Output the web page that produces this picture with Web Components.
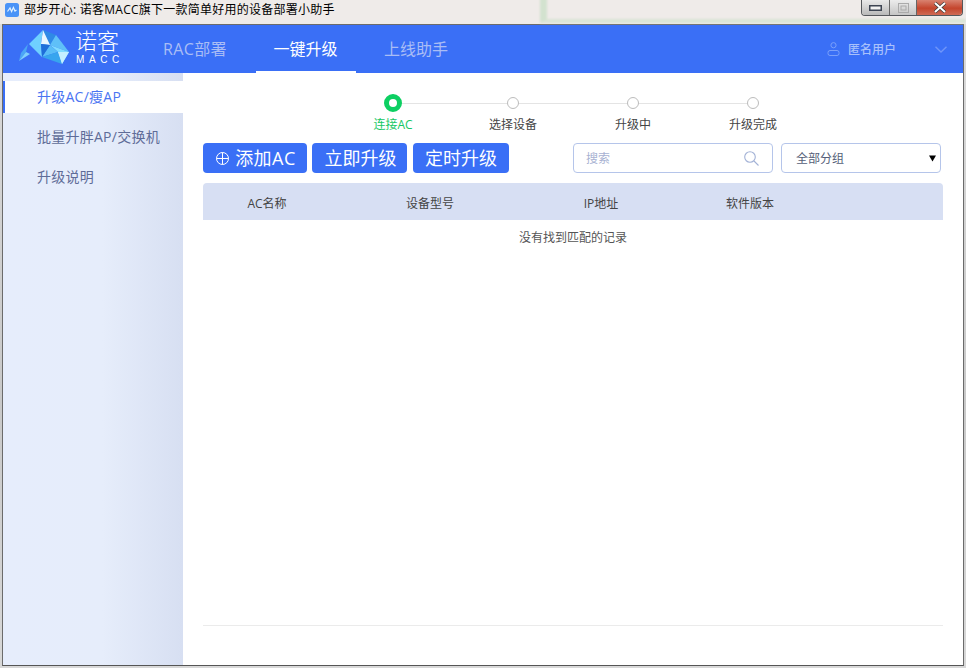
<!DOCTYPE html>
<html lang="zh">
<head>
<meta charset="utf-8">
<title>诺客MACC</title>
<style>
  html, body { margin: 0; padding: 0; height: 100%; }
  body { font-family: "Open Sans", "Noto Sans CJK SC", sans-serif; overflow: hidden; }
</style>
</head>
<body>
<app-window>
  <title-bar slot="title">部步开心: 诺客MACC旗下一款简单好用的设备部署小助手</title-bar>
  <app-header slot="header">
    <nav-tab style="letter-spacing:.4px">RAC部署</nav-tab>
    <nav-tab active>一键升级</nav-tab>
    <nav-tab>上线助手</nav-tab>
  </app-header>
  <side-nav slot="side">
    <nav-item active>升级AC/瘦AP</nav-item>
    <nav-item>批量升胖AP/交换机</nav-item>
    <nav-item>升级说明</nav-item>
  </side-nav>
  <step-bar>
    <step-item active>连接AC</step-item>
    <step-item>选择设备</step-item>
    <step-item>升级中</step-item>
    <step-item last>升级完成</step-item>
  </step-bar>
  <tool-bar>
    <tool-button plus style="width:104px;padding-left:2px;letter-spacing:.5px">添加AC</tool-button>
    <tool-button style="width:95px;margin-left:5px;padding-left:2px">立即升级</tool-button>
    <tool-button style="width:96px;margin-left:6px">定时升级</tool-button>
    <search-box slot="right">搜索</search-box>
    <group-select slot="right">全部分组</group-select>
  </tool-bar>
  <data-table></data-table>
  <page-foot></page-foot>
</app-window>

<script>
class AppWindow extends HTMLElement {
  constructor() {
    super();
    this.attachShadow({mode: 'open'}).innerHTML = `
      <style>
        :host { display: flex; flex-direction: column; box-sizing: border-box; width: 966px; height: 668px;
          background: linear-gradient(#dcdcdc, #c9c9c9 60%, #d8d8d8); font-size: 12px; }
        .frame { flex: 1; min-height: 0; margin: 0 2px 2px; display: flex; flex-direction: column;
          border: 1px solid #6b6b6b; border-bottom-color: #555; background: #fff; }
        .body { flex: 1; min-height: 0; display: flex; }
        main { flex: 1; min-width: 0; display: flex; flex-direction: column; padding: 21px 20px 39px; }
      </style>
      <slot name="title"></slot>
      <div class="frame">
        <slot name="header"></slot>
        <div class="body">
          <slot name="side"></slot>
          <main><slot></slot></main>
        </div>
      </div>`;
  }
}

class TitleBar extends HTMLElement {
  constructor() {
    super();
    this.attachShadow({mode: 'open'}).innerHTML = `
      <style>
        :host { display: flex; align-items: center; position: relative; height: 24px; padding-left: 5px;
          background: #efebe9; color: #000; font-size: 12px; letter-spacing: .25px; box-sizing: border-box; }
        .icon { width: 14px; height: 14px; margin: -4px 5px 0 0; flex: none; }
        .text { margin-top: -6px; position: relative; }
        /* window behind this one, showing through the glass */
        .behind { position: absolute; left: 540px; top: -6px; right: 0; bottom: 1px;
          border-left: 7px solid #d3e2cf; border-bottom: 4px solid #d9e4d5; filter: blur(1px); }
        .caption { position: absolute; right: 3px; top: 0; display: flex; height: 15px; width: 100px;
          border: 1px solid #55585c; border-top: 0; border-radius: 0 0 4px 4px; overflow: hidden; }
        .caption div { display: flex; align-items: center; justify-content: center; }
        .min { width: 27px; background: linear-gradient(#e9e9e9, #b9b9b9); border-right: 1px solid #666; }
        .max { width: 26px; background: linear-gradient(#ececec, #c5c5c5); border-right: 1px solid #666; }
        .close { flex: 1; background: linear-gradient(#d98270, #c4452d 55%, #cf6a55); }
      </style>
      <div class="behind"></div>
      <svg class="icon" viewBox="0 0 14 14">
        <rect width="14" height="14" rx="2.5" fill="#4a93f7"/>
        <path d="M2.5 8.5 L5 5 L6.6 8.5 L8.4 4.5 L10 8 L11.5 7" fill="none" stroke="#dff0ff" stroke-width="1.2"/>
      </svg>
      <span class="text"><slot></slot></span>
      <div class="caption">
        <div class="min"><svg width="13" height="6"><rect x=".75" y=".75" width="11.5" height="4.5" fill="#f2f2f2" stroke="#3d4452" stroke-width="1.5"/></svg></div>
        <div class="max"><svg width="11" height="10"><rect x=".5" y=".5" width="10" height="9" fill="none" stroke="#aaa"/><rect x="3" y="3" width="5" height="4" fill="none" stroke="#aaa"/></svg></div>
        <div class="close"><svg width="14" height="11" viewBox="0 0 14 11"><path d="M2 1 L12 10 M12 1 L2 10" stroke="#3b3b3b" stroke-width="3.4"/><path d="M2 1 L12 10 M12 1 L2 10" stroke="#fff" stroke-width="2"/></svg></div>
      </div>`;
  }
}

class AppHeader extends HTMLElement {
  constructor() {
    super();
    this.attachShadow({mode: 'open'}).innerHTML = `
      <style>
        :host { display: flex; height: 48px; background: #3a6ff6; flex: none; }
        .logo { width: 142px; display: flex; flex: none; }
        .logo svg { margin: 3px 0 0 15px; width: 54px; height: 38px; flex: none; }
        .brand { display: flex; flex-direction: column; margin-left: 3px; color: #fff; }
        .name { font-size: 22px; line-height: 22px; margin-top: 4px; white-space: nowrap; font-weight: 300; }
        .macc { font-size: 10px; line-height: 11px; letter-spacing: 4.6px; margin: 3px 0 0 1px; font-family: "Liberation Sans", sans-serif; }
        .tabs { display: flex; gap: 10.5px; }
        .user { margin-left: auto; display: flex; align-items: center; color: #a9c1fb; font-size: 12px; font-weight: 500; padding-right: 16px; }
        .user svg.p { margin-right: 8px; }
        .user svg.c { margin-left: 39px; }
      </style>
      <div class="logo">
        <svg viewBox="18 26 54 38">
          <path d="M19 59 L21 51 L28 42 L26 50 Z" fill="#4aa6f5"/>
          <path d="M19 59 L26 50 L30 52 Z" fill="#7fd0fb"/>
          <path d="M29 42 L43 28 L41 42 L42 55 Z" fill="#6fd0ff"/>
          <path d="M43 28 L56 33 L50 43 L41 42 Z" fill="#2f8ae6"/>
          <path d="M43 28 L50 43 L41 42 Z" fill="#e8f6ff"/>
          <path d="M56 33 L69 50 L50 43 Z" fill="#5fc0f8"/>
          <path d="M50 43 L69 50 L62 62 L58 50 Z" fill="#7fdcff"/>
          <path d="M50 43 L58 50 L42 55 Z" fill="#59bdf7"/>
          <path d="M42 55 L58 50 L62 62 Z" fill="#37a5ee"/>
          <path d="M58 50 L69 50 L62 62 Z" fill="#c4efff"/>
          <path d="M41 42 L50 43 L42 55 Z" fill="#1e6fd8"/>
        </svg>
        <div class="brand">
          <span class="name">诺客</span>
          <span class="macc">MACC</span>
        </div>
      </div>
      <div class="tabs"><slot></slot></div>
      <div class="user">
        <svg class="p" width="13" height="14" viewBox="0 0 13 14" fill="none" stroke="#7ba0fa">
          <circle cx="6.5" cy="3.2" r="2.6"/>
          <rect x="1" y="8.5" width="11" height="5" rx="2"/>
        </svg>
        匿名用户
        <svg class="c" width="12" height="7" viewBox="0 0 12 7" fill="none" stroke="#6f95f9" stroke-width="1.4"><path d="M.5 .8 L6 6 L11.5 .8"/></svg>
      </div>`;
  }
}

class NavTab extends HTMLElement {
  constructor() {
    super();
    this.attachShadow({mode: 'open'}).innerHTML = `
      <style>
        :host { display: flex; align-items: center; justify-content: center; box-sizing: border-box; width: 100px;
          height: 48px; font-size: 16px; color: #a9bdf5; border-bottom: 2px solid transparent; white-space: nowrap; }
        :host([active]) { color: #fff; border-bottom-color: #fff; }
      </style>
      <slot></slot>`;
  }
}

class SideNav extends HTMLElement {
  constructor() {
    super();
    this.attachShadow({mode: 'open'}).innerHTML = `
      <style>
        :host { display: flex; flex-direction: column; gap: 8px; flex: none; box-sizing: border-box; width: 180px; padding-top: 8px;
          background: linear-gradient(90deg, #e6edfc, #e6edfb 55%, #d7dff2); }
      </style>
      <slot></slot>`;
  }
}

class NavItem extends HTMLElement {
  constructor() {
    super();
    this.attachShadow({mode: 'open'}).innerHTML = `
      <style>
        :host { display: flex; align-items: center; box-sizing: border-box; height: 32px; padding: 0 0 2px 34px;
          font-size: 14px; letter-spacing: .25px; color: #5f6c98; white-space: nowrap; }
        :host([active]) { background: #fff; color: #4a74f2; border-left: 2px solid #3a6ff6; padding-left: 32px; }
      </style>
      <slot></slot>`;
  }
}

class StepBar extends HTMLElement {
  constructor() {
    super();
    this.attachShadow({mode: 'open'}).innerHTML = `
      <style>
        :host { display: flex; justify-content: center; flex: none; }
      </style>
      <slot></slot>`;
  }
}

class StepItem extends HTMLElement {
  constructor() {
    super();
    this.attachShadow({mode: 'open'}).innerHTML = `
      <style>
        :host { display: flex; flex-direction: column; align-items: center; position: relative; width: 120px;
          font-size: 12px; line-height: 16px; color: #444; }
        :host([active]) { color: #17c765; }
        .dot { height: 18px; display: flex; align-items: center; justify-content: center; margin-bottom: 5px; }
        .dot i { display: block; box-sizing: border-box; position: relative; z-index: 1; width: 12px; height: 12px;
          background: #fff; border: 1px solid #bcbcbc; border-radius: 50%; }
        :host([active]) .dot i { width: 18px; height: 18px; border: 5px solid #0dcf62; }
        .line { position: absolute; left: 60px; top: 8.5px; width: 120px; height: 1px; background: #e4e4e4; }
        :host([last]) .line { display: none; }
      </style>
      <div class="line"></div>
      <div class="dot"><i></i></div>
      <slot></slot>`;
  }
}

class ToolBar extends HTMLElement {
  constructor() {
    super();
    this.attachShadow({mode: 'open'}).innerHTML = `
      <style>
        :host { display: flex; height: 30px; margin-top: 10px; flex: none; }
        .right { margin-left: auto; display: flex; gap: 8px; margin-right: 2px; }
      </style>
      <slot></slot>
      <div class="right"><slot name="right"></slot></div>`;
  }
}

class ToolButton extends HTMLElement {
  constructor() {
    super();
    this.attachShadow({mode: 'open'}).innerHTML = `
      <style>
        :host { display: flex; align-items: center; justify-content: center; box-sizing: border-box; height: 30px; padding-bottom: 2px;
          background: #3a6ff6; color: #fff; font-size: 18px; border-radius: 4px; white-space: nowrap; }
        svg { margin: 2px 6px 0 0; display: none; }
        :host([plus]) svg { display: block; }
      </style>
      <svg width="13" height="13" viewBox="0 0 13 13" fill="none" stroke="#fff"><circle cx="6.5" cy="6.5" r="6"/><path d="M6.5 .5 V12.5 M.5 6.5 H12.5"/></svg>
      <slot></slot>`;
  }
}

class SearchBox extends HTMLElement {
  constructor() {
    super();
    this.attachShadow({mode: 'open'}).innerHTML = `
      <style>
        :host { display: flex; align-items: center; justify-content: space-between; box-sizing: border-box; width: 200px; height: 30px;
          border: 1px solid #b5c5ea; border-radius: 4px; padding: 0 13px 0 12px; font-size: 12px; color: #a8b2d2; }
      </style>
      <slot></slot>
      <svg width="15" height="15" viewBox="0 0 15 15" fill="none" stroke="#a3b2d6" stroke-width="1.1"><circle cx="6" cy="6" r="5.3"/><path d="M10 10 L14.5 14.5"/></svg>`;
  }
}

class GroupSelect extends HTMLElement {
  constructor() {
    super();
    this.attachShadow({mode: 'open'}).innerHTML = `
      <style>
        :host { display: flex; align-items: center; justify-content: space-between; box-sizing: border-box; width: 160px; height: 30px;
          border: 1px solid #b5c5ea; border-radius: 4px; padding: 0 4px 0 14px; font-size: 12px; color: #555e78; }
      </style>
      <slot></slot>
      <svg width="7" height="7" viewBox="0 0 7 7"><path d="M0 .5 H7 L3.5 6.5 Z" fill="#000"/></svg>`;
  }
}

class DataTable extends HTMLElement {
  constructor() {
    super();
    this.attachShadow({mode: 'open'}).innerHTML = `
      <style>
        :host { display: block; margin-top: 10px; flex: none; font-size: 12px; color: #444; }
        .row { display: grid; grid-template-columns: 128px 198px 144px 154px 1fr; }
        .head { box-sizing: border-box; height: 37px; padding-top: 3px; align-items: center; background: #d7dff3; border-radius: 4px 4px 0 0; text-align: center; }
        .empty { height: 34px; display: flex; align-items: center; justify-content: center; color: #555; }
      </style>
      <div class="row head">
        <span>AC名称</span><span>设备型号</span><span>IP地址</span><span>软件版本</span><span></span>
      </div>
      <div class="empty">没有找到匹配的记录</div>`;
  }
}

class PageFoot extends HTMLElement {
  constructor() {
    super();
    this.attachShadow({mode: 'open'}).innerHTML = `
      <style>
        :host { display: block; margin-top: auto; height: 1px; background: #ebebeb; flex: none; }
      </style>`;
  }
}

customElements.define('app-window', AppWindow);
customElements.define('title-bar', TitleBar);
customElements.define('app-header', AppHeader);
customElements.define('nav-tab', NavTab);
customElements.define('side-nav', SideNav);
customElements.define('nav-item', NavItem);
customElements.define('step-bar', StepBar);
customElements.define('step-item', StepItem);
customElements.define('tool-bar', ToolBar);
customElements.define('tool-button', ToolButton);
customElements.define('search-box', SearchBox);
customElements.define('group-select', GroupSelect);
customElements.define('data-table', DataTable);
customElements.define('page-foot', PageFoot);
</script>
</body>
</html>
